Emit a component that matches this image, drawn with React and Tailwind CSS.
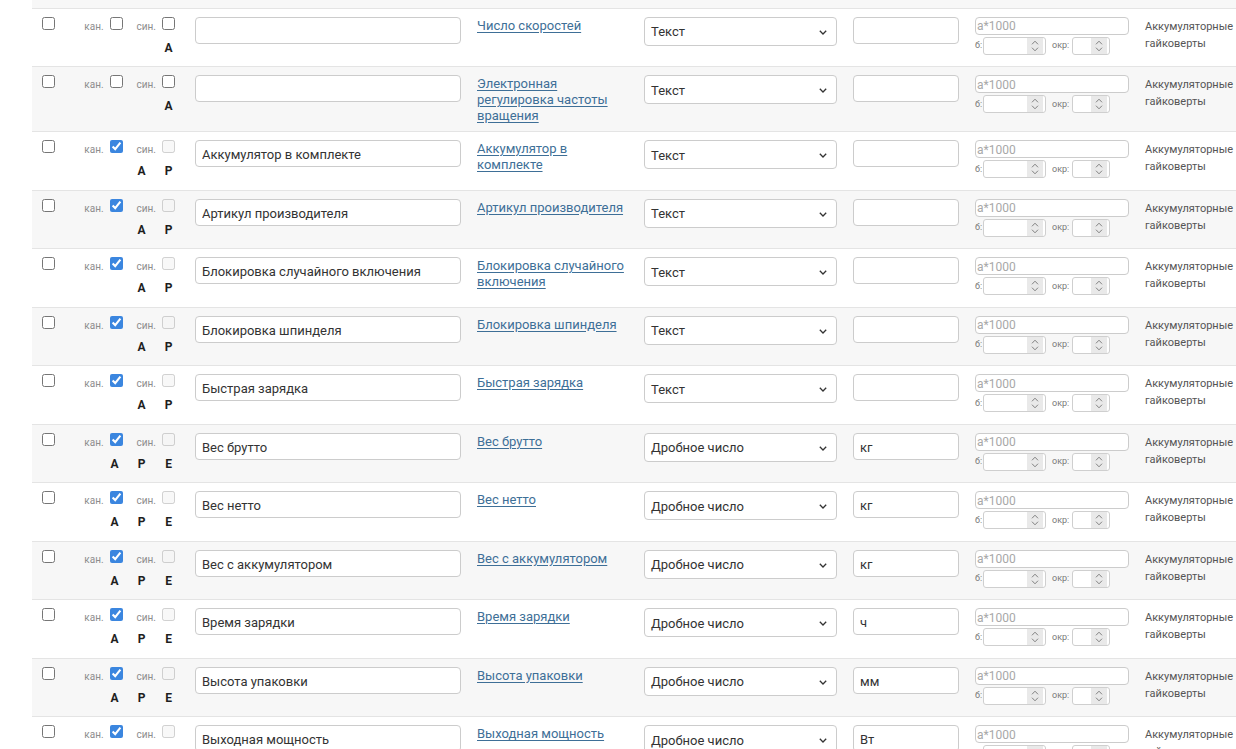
import React from "react";

const rows = [
  { name: "", link: "Число скоростей", type: "Текст", unit: "", kan: false, syn: true, letters: ["А"] },
  { name: "", link: "Электронная регулировка частоты вращения", type: "Текст", unit: "", kan: false, syn: true, letters: ["А"] },
  { name: "Аккумулятор в комплекте", link: "Аккумулятор в комплекте", type: "Текст", unit: "", kan: true, syn: false, letters: ["А", "Р"] },
  { name: "Артикул производителя", link: "Артикул производителя", type: "Текст", unit: "", kan: true, syn: false, letters: ["А", "Р"] },
  { name: "Блокировка случайного включения", link: "Блокировка случайного включения", type: "Текст", unit: "", kan: true, syn: false, letters: ["А", "Р"] },
  { name: "Блокировка шпинделя", link: "Блокировка шпинделя", type: "Текст", unit: "", kan: true, syn: false, letters: ["А", "Р"] },
  { name: "Быстрая зарядка", link: "Быстрая зарядка", type: "Текст", unit: "", kan: true, syn: false, letters: ["А", "Р"] },
  { name: "Вес брутто", link: "Вес брутто", type: "Дробное число", unit: "кг", kan: true, syn: false, letters: ["А", "Р", "Е"] },
  { name: "Вес нетто", link: "Вес нетто", type: "Дробное число", unit: "кг", kan: true, syn: false, letters: ["А", "Р", "Е"] },
  { name: "Вес с аккумулятором", link: "Вес с аккумулятором", type: "Дробное число", unit: "кг", kan: true, syn: false, letters: ["А", "Р", "Е"] },
  { name: "Время зарядки", link: "Время зарядки", type: "Дробное число", unit: "ч", kan: true, syn: false, letters: ["А", "Р", "Е"] },
  { name: "Высота упаковки", link: "Высота упаковки", type: "Дробное число", unit: "мм", kan: true, syn: false, letters: ["А", "Р", "Е"] },
  { name: "Выходная мощность", link: "Выходная мощность", type: "Дробное число", unit: "Вт", kan: true, syn: false, letters: ["А", "Р", "Е"] },
];

function Spin() {
  return (
    <div className="flex h-full w-[16px] flex-col items-center justify-center bg-[#e9e9e9]">
      <svg width="8" height="5" viewBox="0 0 8 5" className="mb-[2px]">
        <path d="M1 4.3 L4 1.2 L7 4.3" fill="none" stroke="#808080" strokeWidth="1" />
      </svg>
      <svg width="8" height="5" viewBox="0 0 8 5">
        <path d="M1 0.7 L4 3.8 L7 0.7" fill="none" stroke="#808080" strokeWidth="1" />
      </svg>
    </div>
  );
}

function NumBox({ w }) {
  return (
    <div className={`flex h-[18px] ${w} items-stretch justify-end overflow-hidden rounded-[3px] border border-[#cfcfcf] bg-white pr-[2px]`}>
      <Spin />
    </div>
  );
}

function Row({ r, gray }) {
  return (
    <div
      className={`flex items-start border-b border-[#e4e4e4] pt-2 pb-2 ${gray ? "bg-[#f7f7f7]" : "bg-white"}`}
    >
      <div className="w-[48px] pl-[10px]">
        <input type="checkbox" className="m-0 block h-[13px] w-[13px]" />
      </div>
      <div className="flex h-[41.5px] w-[95px] flex-col items-end">
        <div className="flex h-[21px] items-start">
          <span className="mr-[6px] mt-[3px] text-[10px] leading-[13px] text-[#8d8d8d]">кан.</span>
          <input
            type="checkbox"
            defaultChecked={r.kan}
            className="m-0 block h-[13px] w-[13px] accent-[#3b86df]"
          />
          <span className="ml-[14px] mr-[6px] mt-[3px] text-[10px] leading-[13px] text-[#8d8d8d]">син.</span>
          <input
            type="checkbox"
            disabled={!r.syn}
            className="m-0 block h-[13px] w-[13px]"
          />
        </div>
        <div className="flex h-[20.5px] items-center gap-[14px]">
          {r.letters.map((l) => (
            <span key={l} className="w-[13px] text-center text-[12px] font-bold leading-[20px] text-[#1e1e1e]">
              {l}
            </span>
          ))}
        </div>
      </div>
      <input
        type="text"
        defaultValue={r.name}
        className="ml-[20px] h-[27px] w-[266px] rounded-[4px] border border-[#cccccc] bg-white px-[6px] pt-[2px] text-[13px] text-[#333] outline-none"
      />
      <a
        href="#"
        className="relative top-[1px] ml-[16px] w-[150px] text-[13px] leading-[16px] text-[#3e6f97] underline underline-offset-2"
      >
        {r.link}
      </a>
      <div className="relative ml-[17px] flex h-[29px] w-[193px] items-center rounded-[4px] border border-[#cccccc] bg-white pl-[6px] pt-[2px] text-[13px] text-[#333]">
        <span>{r.type}</span>
        <svg width="8" height="5" viewBox="0 0 8 5" className="absolute right-[9px] top-[12px]">
          <path d="M0.8 0.8 L4 4 L7.2 0.8" fill="none" stroke="#333" strokeWidth="1.3" />
        </svg>
      </div>
      <input
        type="text"
        defaultValue={r.unit}
        className="ml-[16px] h-[27px] w-[106px] rounded-[4px] border border-[#cccccc] bg-white px-[6px] pt-[2px] text-[13px] text-[#333] outline-none"
      />
      <div className="ml-[16px] flex w-[154px] flex-col gap-[2px]">
        <input
          type="text"
          placeholder="а*1000"
          className="h-[18px] w-full rounded-[4px] border border-[#cccccc] bg-white px-[1px] pt-[1px] text-[12px] text-[#333] outline-none placeholder:text-[#a8a8a8]"
        />
        <div className="flex items-center">
          <span className="mt-[1px] w-[8px] text-[9px] text-[#777]">б:</span>
          <NumBox w="w-[63px]" />
          <span className="ml-[6px] mt-[1px] w-[20px] text-[9px] text-[#777]">окр:</span>
          <NumBox w="w-[38px]" />
        </div>
      </div>
      <div className="ml-[16px] pt-[1px] text-[11px] leading-[17px] text-[#555]">
        Аккумуляторные
        <br />
        гайковерты
      </div>
    </div>
  );
}

export default function App() {
  return (
    <div className="h-[749px] w-[1236px] overflow-hidden bg-white" style={{ fontFamily: 'Roboto, "Noto Sans", sans-serif' }}>
      <div className="ml-[32px] w-[1240px]">
        <div className="h-[8.5px] border-b border-[#e4e4e4] bg-[#f7f7f7]" />
        {rows.map((r, i) => (
          <Row key={i} r={r} gray={i % 2 === 1} />
        ))}
      </div>
    </div>
  );
}
